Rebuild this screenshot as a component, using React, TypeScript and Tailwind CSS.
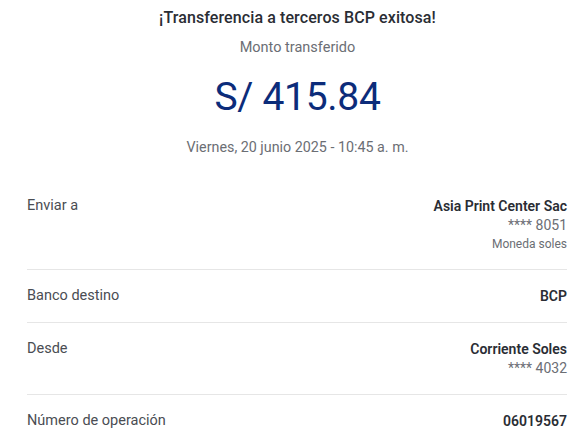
import React from "react";

interface Row {
  label: string;
  value: string;
  extra?: string[];
}

const rows: Row[] = [
  { label: "Enviar a", value: "Asia Print Center Sac", extra: ["**** 8051", "Moneda soles"] },
  { label: "Banco destino", value: "BCP" },
  { label: "Desde", value: "Corriente Soles", extra: ["**** 4032"] },
  { label: "Número de operación", value: "06019567" },
];

export default function App() {
  return (
    <div className="w-[577px] h-[444px] overflow-hidden bg-white font-['Roboto',sans-serif]">
      {/* Header */}
      <div className="flex flex-col items-center pt-[8px] pl-[18px]">
        <h1 className="text-[16px] leading-[20px] font-medium text-[#2a2d34] tracking-[0.1px]">
          ¡Transferencia a terceros BCP exitosa!
        </h1>
        <p className="mt-[10px] text-[14.5px] leading-[20px] text-[#6b6e74]">Monto transferido</p>
        <p className="mt-[16px] text-[39px] leading-[46px] text-[#0c2c7a] tracking-[-0.3px]">S/ 415.84</p>
        <p className="mt-[17px] text-[14.3px] leading-[20px] text-[#6b6e74]">
          Viernes, 20 junio 2025 - 10:45 a. m.
        </p>
      </div>

      {/* Detail rows */}
      <div className="mt-[23px] pl-[27px] pr-[10px]">
        {rows.map((row, i) => (
          <div
            key={row.label}
            className={`flex justify-between pt-[16px] pb-[16px] ${i < rows.length - 1 ? "border-b border-[#e6e6e6]" : ""}`}
          >
            <span className="text-[14.5px] leading-[20px] text-[#4a4d53]">{row.label}</span>
            <div className="flex flex-col items-end">
              <span className="text-[14px] leading-[20px] font-semibold text-[#2a2d34]">{row.value}</span>
              {row.extra?.map((e, j) => (
                <span
                  key={e}
                  className={
                    j === 0
                      ? "text-[14px] leading-[19px] text-[#6b6e74]"
                      : "text-[12px] leading-[18px] text-[#6b6e74]"
                  }
                >
                  {e}
                </span>
              ))}
            </div>
          </div>
        ))}
      </div>
    </div>
  );
}
